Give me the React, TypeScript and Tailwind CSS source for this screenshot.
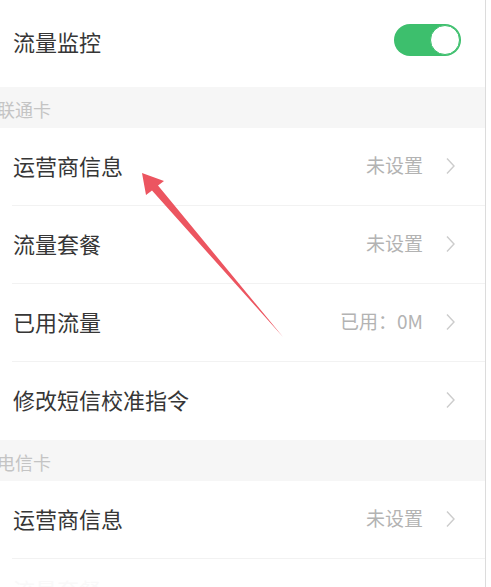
import React from "react";

type Row = { label: string; value?: string };

const unicom: Row[] = [
  { label: "运营商信息", value: "未设置" },
  { label: "流量套餐", value: "未设置" },
  { label: "已用流量", value: "已用：0M" },
  { label: "修改短信校准指令" },
];

const telecom: Row[] = [{ label: "运营商信息", value: "未设置" }];

function Chevron() {
  return (
    <svg width="11" height="18" viewBox="0 0 11 18" className="shrink-0">
      <path d="M2 1.5 L9 9 L2 16.5" fill="none" stroke="#cccccc" strokeWidth="1.4" />
    </svg>
  );
}

function SettingRow({ row, last }: { row: Row; last?: boolean }) {
  return (
    <div className="relative flex h-[78px] items-center pb-[3px] pl-[13px] pr-[29px]">
      <span className="flex-1 text-[22px] text-[#363636]">{row.label}</span>
      {row.value && <span className="mr-[22px] text-[19px] text-[#b3b3b3]">{row.value}</span>}
      <Chevron />
      {!last && <div className="absolute bottom-0 left-[12px] right-0 h-px bg-[#f2f2f2]" />}
    </div>
  );
}

function Header({ title }: { title: string }) {
  return (
    <div className="flex h-[41px] items-center bg-[#f6f6f6] pt-[3px] -indent-[3px] text-[18px] text-[#c4c4c4]">
      {title}
    </div>
  );
}

export default function App() {
  return (
    <div
      className="relative h-[587px] w-[491px] overflow-hidden bg-white"
      style={{ fontFamily: '"Noto Sans CJK SC", "Noto Sans", sans-serif' }}
    >
      <div className="h-full w-[486px] border-r border-[#dcdcdc]">
        <div className="flex h-[87px] items-center pl-[13px] pr-[24px]">
          <span className="flex-1 pb-[5px] text-[22px] text-[#363636]">流量监控</span>
          <div className="mb-[8px] flex h-[32px] w-[67px] items-center justify-end rounded-full bg-[#3dbf6d] p-[1px]">
            <div className="h-[30px] w-[30px] rounded-full border border-[#3dbf6d] bg-white" />
          </div>
        </div>
        <Header title="联通卡" />
        {unicom.map((r, i) => (
          <SettingRow key={i} row={r} last={i === unicom.length - 1} />
        ))}
        <Header title="电信卡" />
        {telecom.map((r, i) => (
          <SettingRow key={i} row={r} />
        ))}
        <div className="flex h-[78px] items-start pl-[13px] pt-[14px]">
          <span className="text-[22px] text-[#f9f9f9]">流量套餐</span>
        </div>
      </div>
      <svg className="absolute left-0 top-0" width="491" height="587" viewBox="0 0 491 587">
        <polygon
          points="142,173 164,181 158,185.5 283,337 152,190.5 146,195"
          fill="#ec5560"
        />
      </svg>
    </div>
  );
}
